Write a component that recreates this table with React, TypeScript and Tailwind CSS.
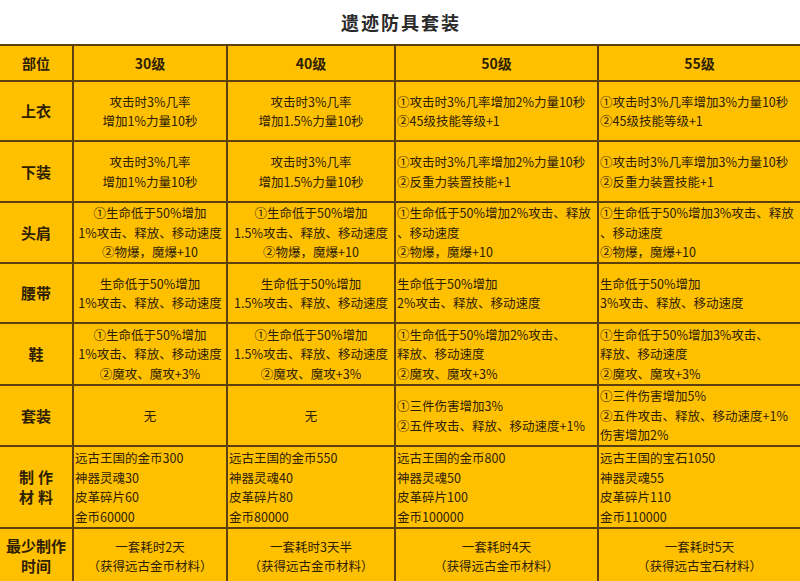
import React from "react";

type Cell = { lines: string[]; align: "center" | "left" };

const font = { fontFamily: '"Noto Sans CJK SC", "Noto Sans", sans-serif' };

const rows: { label: string[]; h: string; cells: Cell[]; spaced?: boolean }[] = [
  {
    label: ["上衣"],
    h: "h-[58px]",
    cells: [
      { lines: ["攻击时3%几率", "增加1%力量10秒"], align: "center" },
      { lines: ["攻击时3%几率", "增加1.5%力量10秒"], align: "center" },
      { lines: ["①攻击时3%几率增加2%力量10秒", "②45级技能等级+1"], align: "left" },
      { lines: ["①攻击时3%几率增加3%力量10秒", "②45级技能等级+1"], align: "left" },
    ],
  },
  {
    label: ["下装"],
    h: "h-[59px]",
    cells: [
      { lines: ["攻击时3%几率", "增加1%力量10秒"], align: "center" },
      { lines: ["攻击时3%几率", "增加1.5%力量10秒"], align: "center" },
      { lines: ["①攻击时3%几率增加2%力量10秒", "②反重力装置技能+1"], align: "left" },
      { lines: ["①攻击时3%几率增加3%力量10秒", "②反重力装置技能+1"], align: "left" },
    ],
  },
  {
    label: ["头肩"],
    h: "h-[59px]",
    cells: [
      { lines: ["①生命低于50%增加", "1%攻击、释放、移动速度", "②物爆，魔爆+10"], align: "center" },
      { lines: ["①生命低于50%增加", "1.5%攻击、释放、移动速度", "②物爆，魔爆+10"], align: "center" },
      { lines: ["①生命低于50%增加2%攻击、释放", "、移动速度", "②物爆，魔爆+10"], align: "left" },
      { lines: ["①生命低于50%增加3%攻击、释放", "、移动速度", "②物爆，魔爆+10"], align: "left" },
    ],
  },
  {
    label: ["腰带"],
    h: "h-[58px]",
    cells: [
      { lines: ["生命低于50%增加", "1%攻击、释放、移动速度"], align: "center" },
      { lines: ["生命低于50%增加", "1.5%攻击、释放、移动速度"], align: "center" },
      { lines: ["生命低于50%增加", "2%攻击、释放、移动速度"], align: "left" },
      { lines: ["生命低于50%增加", "3%攻击、释放、移动速度"], align: "left" },
    ],
  },
  {
    label: ["鞋"],
    h: "h-[60px]",
    cells: [
      { lines: ["①生命低于50%增加", "1%攻击、释放、移动速度", "②魔攻、魔攻+3%"], align: "center" },
      { lines: ["①生命低于50%增加", "1.5%攻击、释放、移动速度", "②魔攻、魔攻+3%"], align: "center" },
      { lines: ["①生命低于50%增加2%攻击、", "释放、移动速度", "②魔攻、魔攻+3%"], align: "left" },
      { lines: ["①生命低于50%增加3%攻击、", "释放、移动速度", "②魔攻、魔攻+3%"], align: "left" },
    ],
  },
  {
    label: ["套装"],
    h: "h-[59px]",
    cells: [
      { lines: ["无"], align: "center" },
      { lines: ["无"], align: "center" },
      { lines: ["①三件伤害增加3%", "②五件攻击、释放、移动速度+1%"], align: "left" },
      { lines: ["①三件伤害增加5%", "②五件攻击、释放、移动速度+1%", "伤害增加2%"], align: "left" },
    ],
  },
  {
    label: ["制作", "材料"],
    spaced: true,
    h: "h-[80px]",
    cells: [
      { lines: ["远古王国的金币300", "神器灵魂30", "皮革碎片60", "金币60000"], align: "left" },
      { lines: ["远古王国的金币550", "神器灵魂40", "皮革碎片80", "金币80000"], align: "left" },
      { lines: ["远古王国的金币800", "神器灵魂50", "皮革碎片100", "金币100000"], align: "left" },
      { lines: ["远古王国的宝石1050", "神器灵魂55", "皮革碎片110", "金币110000"], align: "left" },
    ],
  },
  {
    label: ["最少制作", "时间"],
    h: "h-[54px]",
    cells: [
      { lines: ["一套耗时2天", "（获得远古金币材料）"], align: "center" },
      { lines: ["一套耗时3天半", "（获得远古金币材料）"], align: "center" },
      { lines: ["一套耗时4天", "（获得远古金币材料）"], align: "center" },
      { lines: ["一套耗时5天", "（获得远古宝石材料）"], align: "center" },
    ],
  },
];

export default function App() {
  return (
    <div className="w-[800px] h-[581px] overflow-hidden bg-white" style={font}>
      <div className="h-[44px] flex items-center justify-center text-[18px] font-bold text-[#2a2a2a] tracking-[2px] pl-[2px]">
        遗迹防具套装
      </div>
      <div className="grid grid-cols-[72px_152px_166px_201px_201px] gap-[2px] bg-[#5e400c] pt-[2px] text-[#2e2000]">
        <div className="h-[34px] bg-[#ffc000] flex items-center justify-center text-[14px] font-bold">部位</div>
        {["30级", "40级", "50级", "55级"].map((t) => (
          <div key={t} className="h-[34px] bg-[#ffc000] flex items-center justify-center text-[14px] font-bold">
            {t}
          </div>
        ))}
        {rows.map((r, i) => (
          <React.Fragment key={i}>
            <div
              className={`${r.h} bg-[#ffc000] flex flex-col items-center justify-center text-[15px] font-bold leading-[20px] ${
                r.spaced ? "tracking-[4px] pl-[4px]" : ""
              }`}
            >
              {r.label.map((l) => (
                <div key={l}>{l}</div>
              ))}
            </div>
            {r.cells.map((c, j) => (
              <div
                key={j}
                className={`${r.h} bg-[#ffc000] flex flex-col justify-center text-[12.5px] leading-[19.5px] whitespace-nowrap overflow-hidden ${
                  c.align === "center" ? "items-center text-center" : "items-start pl-[1px]"
                }`}
              >
                {c.lines.map((l, k) => (
                  <div key={k}>{l}</div>
                ))}
              </div>
            ))}
          </React.Fragment>
        ))}
      </div>
    </div>
  );
}
